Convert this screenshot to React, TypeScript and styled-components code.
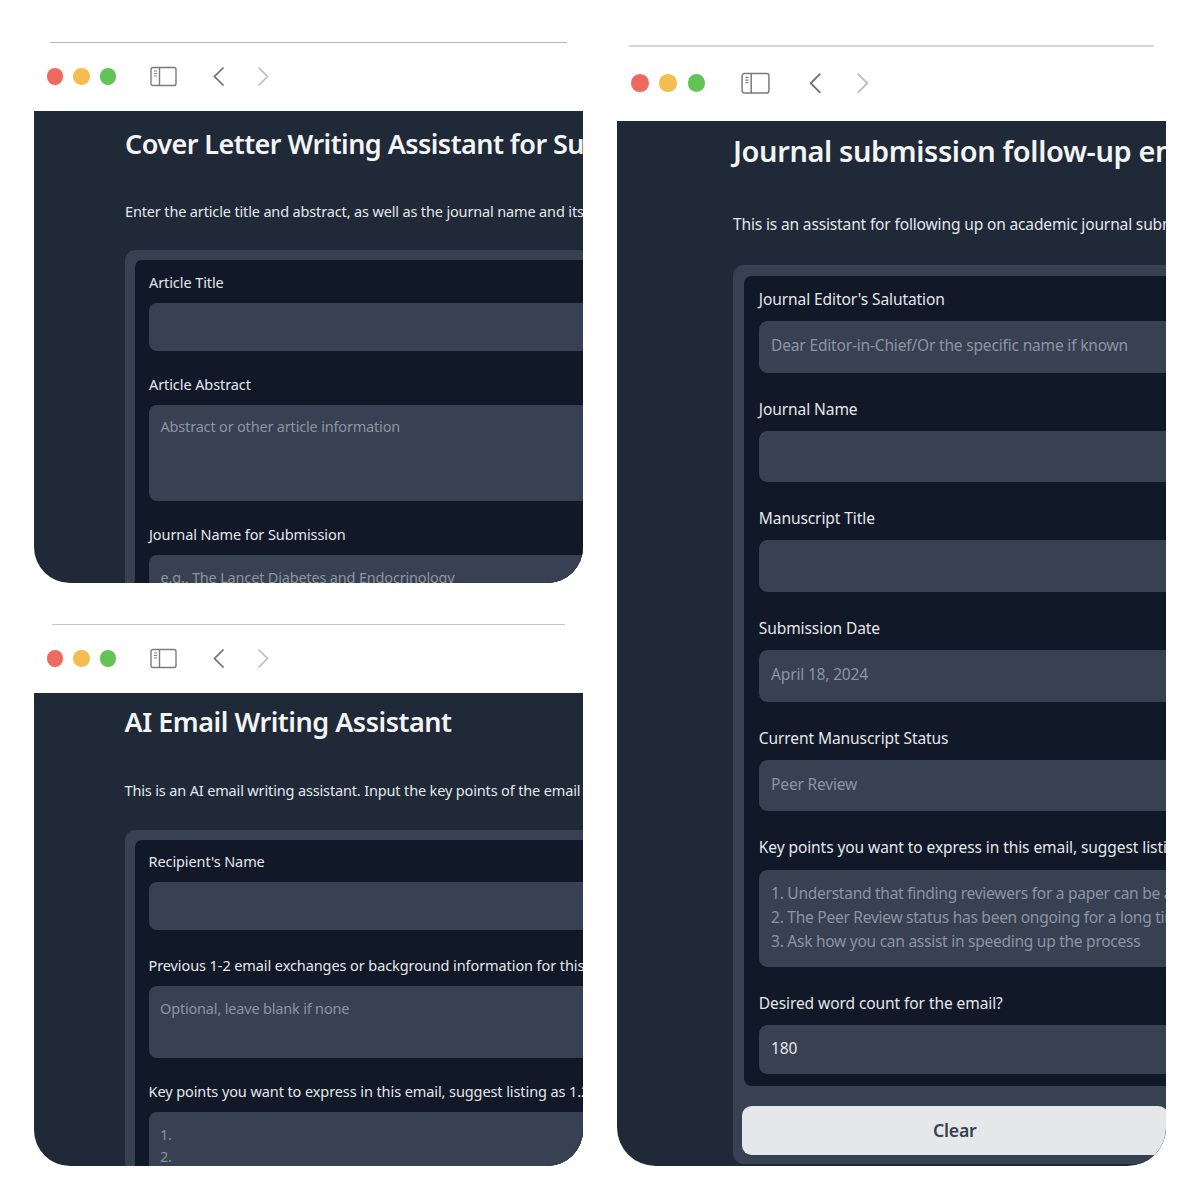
import styled, { createGlobalStyle } from "styled-components";

const GlobalStyle = createGlobalStyle`
  html, body { margin: 0; padding: 0; background: #fff; }
  #root { width: 1200px; height: 1200px; overflow: hidden; }
  * { box-sizing: border-box; }
`;

// every size inside a window is multiplied by --s, the right window is a bigger capture
const u = (n: number) => `calc(${n}px * var(--s))`;

const Desktop = styled.div`
  display: flex;
  gap: 34px;
  width: 1200px;
  height: 1200px;
  padding-left: 34px;
  font-family: "Noto Sans", "Liberation Sans", sans-serif;
`;
const LeftColumn = styled.div`
  display: flex;
  flex-direction: column;
  gap: 41px;
  padding-top: 42px;
`;
const RightColumn = styled.div`
  padding-top: 45px;
`;
const Window = styled.section<{ $scale: number; $height: number }>`
  --s: ${({ $scale }) => $scale};
  display: flex;
  flex-direction: column;
  width: 549px;
  height: ${({ $height }) => $height}px;
  overflow: hidden;
  border-radius: 0 0 ${u(36)} ${u(36)};
`;
const Toolbar = styled.header<{ $line: string; $inset: number; $thick: number; $height: number }>`
  position: relative;
  flex: none;
  display: flex;
  align-items: center;
  height: ${({ $height }) => $height}px;
  padding-left: ${u(13)};
  &::before {
    content: "";
    position: absolute;
    top: 0;
    left: ${({ $inset }) => $inset}px;
    right: ${({ $inset }) => $inset}px;
    height: ${({ $thick }) => $thick}px;
    background: ${({ $line }) => $line};
  }
`;
const Light = styled.span<{ $color: string }>`
  flex: none;
  width: ${u(16.4)};
  height: ${u(16.4)};
  margin-right: ${u(10.1)};
  border-radius: 50%;
  background: ${({ $color }) => $color};
`;
const ToolIcon = styled.svg<{ $left: number; $w: number }>`
  flex: none;
  width: ${({ $w }) => u($w)};
  height: ${u(21)};
  margin-left: ${({ $left }) => u($left)};
`;
const Content = styled.main<{ $left: number; $top: number }>`
  flex: 1;
  min-height: 0;
  overflow: hidden;
  background: #1f2937;
  padding: ${({ $top }) => u($top)} 0 0 ${({ $left }) => $left}px;
`;
const Title = styled.h1<{ $tracking: number }>`
  margin: 0;
  color: #f3f4f6;
  font-size: ${u(27)};
  line-height: ${u(40)};
  font-weight: 600;
  letter-spacing: ${({ $tracking }) => u($tracking)};
  white-space: nowrap;
`;
const Description = styled.p<{ $before: number; $gap: number }>`
  margin: ${({ $before }) => u($before)} 0 ${({ $gap }) => u($gap)};
  color: #e5e7eb;
  font-size: ${u(14.5)};
  line-height: ${u(22)};
  letter-spacing: ${u(-0.15)};
  white-space: nowrap;
`;
const Panel = styled.div`
  width: 900px;
  padding: ${u(10)} ${u(10)} ${u(8.5)};
  background: #374151;
  border-radius: ${u(10)};
`;
const FormCard = styled.div`
  padding: ${u(12.5)} ${u(14)} ${u(11.5)};
  background: #111827;
  border-radius: ${u(7)};
`;
const Label = styled.label`
  display: block;
  padding-bottom: ${u(1)};
  color: #e5e7eb;
  font-size: ${u(14.5)};
  line-height: ${u(19)};
  letter-spacing: ${u(-0.09)};
  white-space: nowrap;
`;
const fieldStyle = `
  display: block;
  width: 100%;
  border: 0;
  outline: 0;
  font-family: inherit;
  background: #374151;
  color: #e5e7eb;
  font-size: calc(14.5px * var(--s));
  &::placeholder { color: #8c94a2; opacity: 1; }
`;
const TextInput = styled.input<{ $after?: number }>`
  ${fieldStyle}
  height: ${u(48)};
  margin: ${u(10)} 0 ${({ $after }) => u($after ?? 24.2)};
  padding: 0 ${u(11.5)} ${u(3)};
  border-radius: ${u(8)};
  letter-spacing: ${u(-0.18)};
`;
const TextArea = styled.textarea<{ $height: number; $tracking?: number }>`
  ${fieldStyle}
  height: ${({ $height }) => u($height)};
  margin: ${u(10)} 0 ${u(24.2)};
  padding: ${u(10.5)} ${u(11.5)};
  border-radius: ${u(8)};
  line-height: ${u(22.4)};
  letter-spacing: ${({ $tracking }) => u($tracking ?? -0.18)};
  resize: none;
  overflow: hidden;
`;
const LastInput = styled(TextInput)`
  height: ${u(45.6)};
  margin-bottom: 0;
`;
const ClearButton = styled.button`
  display: block;
  width: 426px;
  height: ${u(46)};
  margin-top: ${u(18.5)};
  margin-left: -2px;
  border: 0;
  border-radius: ${u(9)};
  background: #e5e7eb;
  color: #374151;
  font-family: inherit;
  font-size: ${u(16.5)};
  font-weight: 600;
  letter-spacing: ${u(-0.2)};
  padding-bottom: ${u(2)};
`;

function WindowBar({
  line,
  inset,
  thick = 1,
  height = 69,
}: {
  line: string;
  inset: number;
  thick?: number;
  height?: number;
}) {
  return (
    <Toolbar $line={line} $inset={inset} $thick={thick} $height={height}>
      <Light $color="#ee6a5f" />
      <Light $color="#f5bd4f" />
      <Light $color="#61c454" />
      <ToolIcon $left={23.5} $w={27} viewBox="0 0 27 21" fill="none">
        <rect x="1" y="1.5" width="25" height="18" rx="2" stroke="#7b7b7b" strokeWidth="1.4" />
        <path d="M9.5 1.5v18" stroke="#7b7b7b" strokeWidth="1.4" />
        <path d="M4 5h3M4 7.5h3M4 10h3" stroke="#7b7b7b" strokeWidth="1.1" />
      </ToolIcon>
      <ToolIcon $left={35} $w={14} viewBox="0 0 14 21" fill="none">
        <path d="M11.5 1.5 2.5 10.5l9 9" stroke="#6f6f6f" strokeWidth="1.7" />
      </ToolIcon>
      <ToolIcon $left={30} $w={14} viewBox="0 0 14 21" fill="none">
        <path d="M2.5 1.5l9 9-9 9" stroke="#bdbdbd" strokeWidth="1.7" />
      </ToolIcon>
    </Toolbar>
  );
}

export default function App() {
  return (
    <Desktop>
      <GlobalStyle />
      <LeftColumn>
        <Window $scale={1} $height={541}>
          <WindowBar line="#b4b4b4" inset={16} />
          <Content $left={91} $top={13}>
            <Title $tracking={-0.55}>Cover Letter Writing Assistant for Submission</Title>
            <Description $before={36} $gap={28}>
              Enter the article title and abstract, as well as the journal name and its requirements
            </Description>
            <Panel>
              <FormCard>
                <Label>Article Title</Label>
                <TextInput readOnly />
                <Label>Article Abstract</Label>
                <TextArea $height={96} readOnly placeholder="Abstract or other article information" />
                <Label>Journal Name for Submission</Label>
                <TextInput readOnly placeholder="e.g., The Lancet Diabetes and Endocrinology" />
              </FormCard>
            </Panel>
          </Content>
        </Window>
        <Window $scale={1} $height={542}>
          <WindowBar line="#c6c6c6" inset={18} />
          <Content $left={90.5} $top={8.5}>
            <Title $tracking={-0.48}>AI Email Writing Assistant</Title>
            <Description $before={37.5} $gap={28.5}>
              This is an AI email writing assistant. Input the key points of the email you want to send
            </Description>
            <Panel>
              <FormCard>
                <Label>Recipient's Name</Label>
                <TextInput $after={26} readOnly />
                <Label>Previous 1-2 email exchanges or background information for this email</Label>
                <TextArea $height={72} readOnly placeholder="Optional, leave blank if none" />
                <Label>Key points you want to express in this email, suggest listing as 1.2.3.</Label>
                <TextArea $height={96} readOnly placeholder={"1.\n2.\n3."} />
              </FormCard>
            </Panel>
          </Content>
        </Window>
      </LeftColumn>
      <RightColumn>
        <Window $scale={1.0735} $height={1121}>
          <WindowBar line="#d6d6d6" inset={12} thick={2} height={76} />
          <Content $left={116} $top={8}>
            <Title $tracking={-0.35}>Journal submission follow-up email assistant</Title>
            <Description $before={37.5} $gap={26.5}>
              This is an assistant for following up on academic journal submissions and their status
            </Description>
            <Panel>
              <FormCard>
                <Label>Journal Editor's Salutation</Label>
                <TextInput readOnly placeholder="Dear Editor-in-Chief/Or the specific name if known" />
                <Label>Journal Name</Label>
                <TextInput readOnly />
                <Label>Manuscript Title</Label>
                <TextInput readOnly />
                <Label>Submission Date</Label>
                <TextInput readOnly placeholder="April 18, 2024" />
                <Label>Current Manuscript Status</Label>
                <TextInput readOnly placeholder="Peer Review" />
                <Label>Key points you want to express in this email, suggest listing as 1.2.3.</Label>
                <TextArea
                  $height={90.5}
                  $tracking={-0.26}
                  readOnly
                  placeholder={
                    "1. Understand that finding reviewers for a paper can be a challenge\n2. The Peer Review status has been ongoing for a long time\n3. Ask how you can assist in speeding up the process"
                  }
                />
                <Label>Desired word count for the email?</Label>
                <LastInput readOnly value="180" />
              </FormCard>
              <ClearButton>Clear</ClearButton>
            </Panel>
          </Content>
        </Window>
      </RightColumn>
    </Desktop>
  );
}
